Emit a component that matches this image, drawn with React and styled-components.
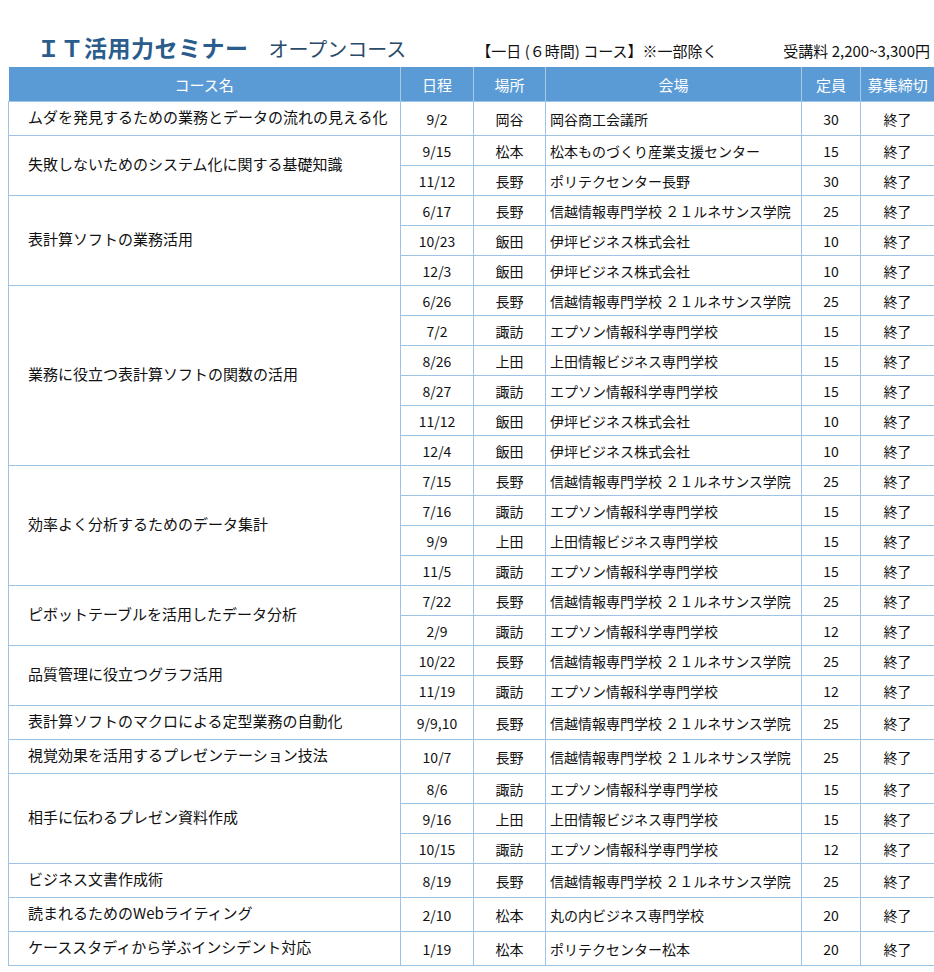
import React from "react";
import styled, { createGlobalStyle } from "styled-components";

const Global = createGlobalStyle`
  body { margin: 0; background: #fff; font-family: "Noto Sans CJK JP", "Noto Sans", sans-serif; color: #111; }
`;

const data = [
  ["ムダを発見するための業務とデータの流れの見える化", [["9/2", "岡谷", "岡谷商工会議所", 30]]],
  ["失敗しないためのシステム化に関する基礎知識", [["9/15", "松本", "松本ものづくり産業支援センター", 15], ["11/12", "長野", "ポリテクセンター長野", 30]]],
  ["表計算ソフトの業務活用", [["6/17", "長野", "信越情報専門学校 ２１ルネサンス学院", 25], ["10/23", "飯田", "伊坪ビジネス株式会社", 10], ["12/3", "飯田", "伊坪ビジネス株式会社", 10]]],
  ["業務に役立つ表計算ソフトの関数の活用", [["6/26", "長野", "信越情報専門学校 ２１ルネサンス学院", 25], ["7/2", "諏訪", "エプソン情報科学専門学校", 15], ["8/26", "上田", "上田情報ビジネス専門学校", 15], ["8/27", "諏訪", "エプソン情報科学専門学校", 15], ["11/12", "飯田", "伊坪ビジネス株式会社", 10], ["12/4", "飯田", "伊坪ビジネス株式会社", 10]]],
  ["効率よく分析するためのデータ集計", [["7/15", "長野", "信越情報専門学校 ２１ルネサンス学院", 25], ["7/16", "諏訪", "エプソン情報科学専門学校", 15], ["9/9", "上田", "上田情報ビジネス専門学校", 15], ["11/5", "諏訪", "エプソン情報科学専門学校", 15]]],
  ["ピボットテーブルを活用したデータ分析", [["7/22", "長野", "信越情報専門学校 ２１ルネサンス学院", 25], ["2/9", "諏訪", "エプソン情報科学専門学校", 12]]],
  ["品質管理に役立つグラフ活用", [["10/22", "長野", "信越情報専門学校 ２１ルネサンス学院", 25], ["11/19", "諏訪", "エプソン情報科学専門学校", 12]]],
  ["表計算ソフトのマクロによる定型業務の自動化", [["9/9,10", "長野", "信越情報専門学校 ２１ルネサンス学院", 25]]],
  ["視覚効果を活用するプレゼンテーション技法", [["10/7", "長野", "信越情報専門学校 ２１ルネサンス学院", 25]]],
  ["相手に伝わるプレゼン資料作成", [["8/6", "諏訪", "エプソン情報科学専門学校", 15], ["9/16", "上田", "上田情報ビジネス専門学校", 15], ["10/15", "諏訪", "エプソン情報科学専門学校", 12]]],
  ["ビジネス文書作成術", [["8/19", "長野", "信越情報専門学校 ２１ルネサンス学院", 25]]],
  ["読まれるためのWebライティング", [["2/10", "松本", "丸の内ビジネス専門学校", 20]]],
  ["ケーススタディから学ぶインシデント対応", [["1/19", "松本", "ポリテクセンター松本", 20]]],
];

const Page = styled.div`
  padding: 30px 0 0 8px;
  width: 926px;
`;

const TitleBar = styled.div`
  display: flex;
  align-items: baseline;
  height: 37px;
  padding-left: 29px;
  padding-right: 4px;
`;

const Title = styled.h1`
  margin: 0;
  font-size: 23px;
  font-weight: bold;
  color: #2a5c8c;
  letter-spacing: 0.5px;
`;

const Sub = styled.span`
  margin-left: 20px;
  font-size: 20px;
  color: #2a4a6a;
`;

const Note = styled.span`
  margin-left: 70px;
  font-size: 15px;
`;

const Fee = styled.span`
  margin-left: auto;
  font-size: 15px;
`;

const Table = styled.table`
  border-collapse: collapse;
  width: 926px;
  table-layout: fixed;
  font-size: 14px;
`;

const Th = styled.th`
  background: #5b9bd5;
  color: #fff;
  font-weight: normal;
  font-size: 15px;
  height: 34px;
  padding: 0;
  border-left: 1px solid #a9c8e8;
  &:first-child { border-left: none; }
`;

const Td = styled.td`
  height: 29px;
  padding: 0 ${(p) => (p.$left ? "4px" : "0")};
  text-align: ${(p) => (p.$left ? "left" : "center")};
  border: 1px solid #9dc3e6;
  white-space: nowrap;
  overflow: hidden;
`;

const CourseTd = styled(Td)`
  padding: 0 0 4px 19px;
  font-size: 15px;
  text-align: left;
`;

export default function App() {
  return (
    <Page>
      <Global />
      <TitleBar>
        <Title>ＩＴ活用力セミナー</Title>
        <Sub>オープンコース</Sub>
        <Note>【一日 (６時間) コース】※一部除く</Note>
        <Fee>受講料 2,200~3,300円</Fee>
      </TitleBar>
      <Table>
        <colgroup>
          <col style={{ width: 392 }} />
          <col style={{ width: 73 }} />
          <col style={{ width: 72 }} />
          <col style={{ width: 256 }} />
          <col style={{ width: 59 }} />
          <col style={{ width: 74 }} />
        </colgroup>
        <thead>
          <tr>
            <Th>コース名</Th>
            <Th>日程</Th>
            <Th>場所</Th>
            <Th>会場</Th>
            <Th>定員</Th>
            <Th>募集締切</Th>
          </tr>
        </thead>
        <tbody>
          {data.map(([name, rows]) =>
            rows.map((r, i) => (
              <tr key={name + i}>
                {i === 0 && <CourseTd rowSpan={rows.length}>{name}</CourseTd>}
                <Td>{r[0]}</Td>
                <Td>{r[1]}</Td>
                <Td $left>{r[2]}</Td>
                <Td>{r[3]}</Td>
                <Td>終了</Td>
              </tr>
            ))
          )}
        </tbody>
      </Table>
    </Page>
  );
}
